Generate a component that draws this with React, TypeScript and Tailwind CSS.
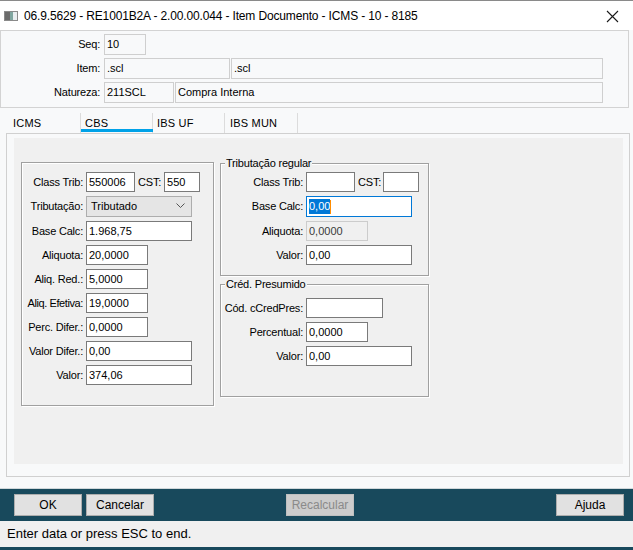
import React from "react";

const Lbl = ({ w, children, cls = "" }: { w: string; children: React.ReactNode; cls?: string }) => (
  <div className={`${w} shrink-0 text-right whitespace-nowrap tracking-[-0.2px] ${cls}`}>{children}</div>
);

const Inp = ({ w, value = "", cls = "" }: { w: string; value?: string; cls?: string }) => (
  <div className={`${w} h-[20px] shrink-0 border border-[#7a7a7a] bg-white flex items-center pl-[2px] whitespace-nowrap ${cls}`}>
    {value}
  </div>
);

const HInp = ({ w, value }: { w: string; value: string }) => (
  <div className={`${w} h-[21px] shrink-0 border border-[#cfcfcf] bg-[#f8f9fa] flex items-center pl-[2px] whitespace-nowrap`}>
    {value}
  </div>
);

const Btn = ({ label, disabled = false, cls = "" }: { label: string; disabled?: boolean; cls?: string }) => (
  <div
    className={`w-[68px] h-[22px] flex items-center justify-center text-[12px] border ${
      disabled ? "bg-[#cccccc] border-[#bfbfbf] text-[#8a8a8a]" : "bg-[#e1e1e1] border-[#adadad] text-black"
    } ${cls}`}
  >
    {label}
  </div>
);

export default function App() {
  return (
    <div className="w-[633px] h-[550px] overflow-hidden bg-[#f8f9fa] flex flex-col text-[11px] text-black font-['Liberation_Sans',Arial,sans-serif]">
      {/* Title bar */}
      <div className="h-[30px] shrink-0 bg-white border-t border-[#8a8a8a] flex items-center relative">
        <svg className="ml-[4px] shrink-0" width="14" height="10" viewBox="0 0 14 10">
          <rect x="0.5" y="0.5" width="13" height="9" fill="#fff" stroke="#8a8a8a" />
          <rect x="1" y="1" width="5" height="8" fill="#6b6b6b" />
          <rect x="6" y="1" width="3" height="8" fill="#7fa6a0" />
          <rect x="9" y="1" width="4" height="8" fill="#e9eef0" />
        </svg>
        <span className="ml-[6px] text-[12px] whitespace-nowrap tracking-[-0.15px]">
          06.9.5629 - RE1001B2A - 2.00.00.044 - Item Documento - ICMS - 10 - 8185
        </span>
        <svg className="absolute left-[606px] top-[9px]" width="13" height="13" viewBox="0 0 13 13">
          <path d="M1 1 L12 12 M12 1 L1 12" stroke="#1a1a1a" strokeWidth="1.1" />
        </svg>
      </div>

      {/* Header panel */}
      <div className="w-[629px] h-[78px] shrink-0 border border-[#d3d3d3] bg-[#f8f9fa] pt-[3px] flex flex-col gap-[3px] text-[11px]">
        <div className="flex items-center">
          <Lbl w="w-[99px]">Seq:</Lbl>
          <div className="ml-[4px]"><HInp w="w-[42px]" value="10" /></div>
        </div>
        <div className="flex items-center">
          <Lbl w="w-[99px]">Item:</Lbl>
          <div className="ml-[4px] flex gap-[1px]">
            <HInp w="w-[126px]" value=".scl" />
            <HInp w="w-[372px]" value=".scl" />
          </div>
        </div>
        <div className="flex items-center">
          <Lbl w="w-[99px]">Natureza:</Lbl>
          <div className="ml-[4px] flex gap-[1px]">
            <HInp w="w-[70px]" value="211SCL" />
            <HInp w="w-[428px]" value="Compra Interna" />
          </div>
        </div>
      </div>

      {/* Tabs */}
      <div className="h-[25px] shrink-0 flex items-stretch text-[11px] tracking-[0.2px]">
        <div className="w-[81px] pl-[13px] flex items-center border-r border-[#dcdcdc] mt-[5px]">ICMS</div>
        <div className="w-[72px] pl-[4px] flex items-center relative border-r border-[#dcdcdc] mt-[5px]">
          CBS
          <div className="absolute left-0 right-[-1px] bottom-[1px] h-[3px] bg-[#00a2e8]" />
        </div>
        <div className="w-[72px] pl-[4px] flex items-center border-r border-[#dcdcdc] mt-[5px]">IBS UF</div>
        <div className="w-[73px] pl-[5px] flex items-center border-r border-[#dcdcdc] mt-[5px]">IBS MUN</div>
      </div>

      {/* Tab panel */}
      <div className="ml-[6px] w-[624px] h-[344px] shrink-0 border border-[#d0d0d0] bg-[#f8f9fa] pl-[7px] pt-[4px] pr-[6px] pb-[12px] flex">
        <div className="flex-1 bg-[#f0f0f0] pl-[7px] pt-[24px] flex items-start">
          {/* Left group */}
          <div className="w-[193px] h-[244px] shrink-0 border border-[#a0a0a0] shadow-[inset_1px_1px_0_#fff,1px_1px_0_#fff] pt-[9px] flex flex-col gap-[4px]">
            <div className="flex items-center">
              <Lbl w="w-[61px]">Class Trib:</Lbl>
              <div className="ml-[3px] flex items-center">
                <Inp w="w-[49px]" value="550006" />
                <span className="ml-[3px] mr-[3px] tracking-[-0.2px]">CST:</span>
                <Inp w="w-[36px]" value="550" />
              </div>
            </div>
            <div className="flex items-center">
              <Lbl w="w-[61px]">Tributação:</Lbl>
              <div className="ml-[3px] w-[106px] h-[21px] border border-[#adadad] bg-[#e5e5e5] flex items-center pl-[4px] relative">
                Tributado
                <svg className="absolute right-[6px] top-[6px]" width="9" height="6" viewBox="0 0 9 6">
                  <path d="M0.5 0.5 L4.5 4.5 L8.5 0.5" fill="none" stroke="#555" strokeWidth="1" />
                </svg>
              </div>
            </div>
            <div className="flex items-center">
              <Lbl w="w-[61px]">Base Calc:</Lbl>
              <div className="ml-[3px]"><Inp w="w-[106px]" value="1.968,75" /></div>
            </div>
            <div className="flex items-center">
              <Lbl w="w-[61px]">Aliquota:</Lbl>
              <div className="ml-[3px]"><Inp w="w-[62px]" value="20,0000" /></div>
            </div>
            <div className="flex items-center">
              <Lbl w="w-[61px]">Aliq. Red.:</Lbl>
              <div className="ml-[3px]"><Inp w="w-[62px]" value="5,0000" /></div>
            </div>
            <div className="flex items-center">
              <Lbl w="w-[61px]" cls="tracking-[-0.4px]">Aliq. Efetiva:</Lbl>
              <div className="ml-[3px]"><Inp w="w-[62px]" value="19,0000" /></div>
            </div>
            <div className="flex items-center">
              <Lbl w="w-[61px]">Perc. Difer.:</Lbl>
              <div className="ml-[3px]"><Inp w="w-[62px]" value="0,0000" /></div>
            </div>
            <div className="flex items-center">
              <Lbl w="w-[61px]">Valor Difer.:</Lbl>
              <div className="ml-[3px]"><Inp w="w-[106px]" value="0,00" /></div>
            </div>
            <div className="flex items-center">
              <Lbl w="w-[61px]">Valor:</Lbl>
              <div className="ml-[3px]"><Inp w="w-[106px]" value="374,06" /></div>
            </div>
          </div>

          {/* Right groups */}
          <div className="ml-[6px] mt-[1px] flex flex-col gap-[8px]">
            <div className="relative w-[209px] h-[113px] border border-[#a0a0a0] shadow-[inset_1px_1px_0_#fff,1px_1px_0_#fff] pt-[8px] flex flex-col gap-[4px]">
              <span className="absolute left-[4px] top-[-8px] bg-[#f0f0f0] px-[1px] leading-[14px] tracking-[-0.2px]">Tributação regular</span>
              <div className="flex items-center">
                <Lbl w="w-[82px]">Class Trib:</Lbl>
                <div className="ml-[3px] flex items-center">
                  <Inp w="w-[49px]" />
                  <span className="ml-[3px] mr-[2px] tracking-[-0.2px]">CST:</span>
                  <Inp w="w-[36px]" />
                </div>
              </div>
              <div className="flex items-center">
                <Lbl w="w-[82px]">Base Calc:</Lbl>
                <div className="ml-[3px] w-[106px] h-[21px] border border-[#0078d7] bg-white flex items-center pl-[2px]">
                  <span className="bg-[#0078d7] text-white leading-[15px]">0,00</span>
                  <span className="w-[1px] h-[14px] bg-[#ff8c00]" />
                </div>
              </div>
              <div className="flex items-center">
                <Lbl w="w-[82px]">Aliquota:</Lbl>
                <div className="ml-[3px] w-[62px] h-[20px] border border-[#cccccc] bg-[#f0f0f0] flex items-center pl-[2px] text-[#3a3a3a]">
                  0,0000
                </div>
              </div>
              <div className="flex items-center">
                <Lbl w="w-[82px]">Valor:</Lbl>
                <div className="ml-[3px]"><Inp w="w-[106px]" value="0,00" /></div>
              </div>
            </div>

            <div className="relative w-[209px] h-[113px] border border-[#a0a0a0] shadow-[inset_1px_1px_0_#fff,1px_1px_0_#fff] pt-[13px] flex flex-col gap-[4px]">
              <span className="absolute left-[4px] top-[-8px] bg-[#f0f0f0] px-[1px] leading-[14px] tracking-[-0.2px]">Créd. Presumido</span>
              <div className="flex items-center">
                <Lbl w="w-[82px]">Cód. cCredPres:</Lbl>
                <div className="ml-[3px]"><Inp w="w-[77px]" /></div>
              </div>
              <div className="flex items-center">
                <Lbl w="w-[82px]">Percentual:</Lbl>
                <div className="ml-[3px]"><Inp w="w-[62px]" value="0,0000" /></div>
              </div>
              <div className="flex items-center">
                <Lbl w="w-[82px]">Valor:</Lbl>
                <div className="ml-[3px]"><Inp w="w-[106px]" value="0,00" /></div>
              </div>
            </div>
          </div>
        </div>
      </div>

      <div className="h-[11px] shrink-0" />

      {/* Button bar */}
      <div className="h-[33px] shrink-0 bg-[#18495c] border-t border-[#d0d7da] flex items-start pt-[5px] pl-[14px] pr-[9px]">
        <Btn label="OK" />
        <Btn label="Cancelar" cls="ml-[4px]" />
        <Btn label="Recalcular" disabled cls="ml-[132px]" />
        <Btn label="Ajuda" cls="ml-auto" />
      </div>

      {/* Status bar */}
      <div className="h-[26px] shrink-0 bg-[#f0f0f0] flex items-center pl-[7px] text-[13px]">
        Enter data or press ESC to end.
      </div>
      <div className="flex-1 bg-[#18495c]" />
    </div>
  );
}
